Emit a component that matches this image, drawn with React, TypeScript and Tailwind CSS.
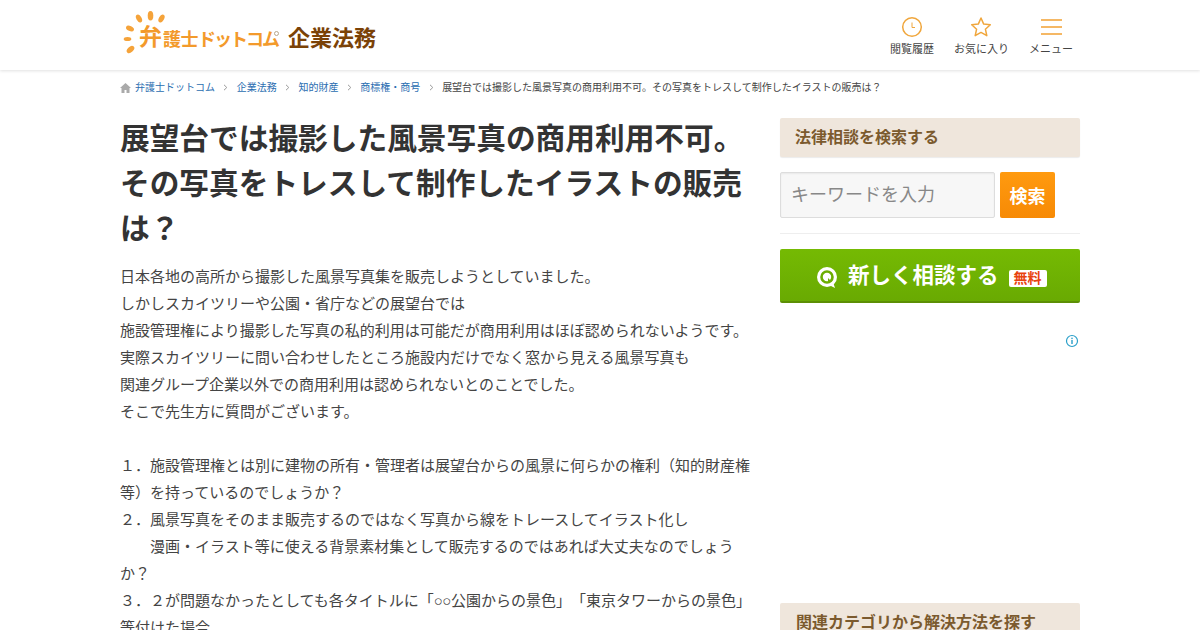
import React from "react";

function Logo() {
  return (
    <div className="relative h-[44px] w-[156px]">
      <svg className="absolute left-0 top-0" width="50" height="44" viewBox="0 0 50 44">
        <g fill="#f5a33a">
          <ellipse cx="27.5" cy="4.8" rx="2.8" ry="4.8" />
          <ellipse cx="16" cy="7.5" rx="2.6" ry="4.2" transform="rotate(-30 16 7.5)" />
          <ellipse cx="38.5" cy="7.5" rx="2.6" ry="4.2" transform="rotate(30 38.5 7.5)" />
          <ellipse cx="7" cy="17.5" rx="2.6" ry="4.2" transform="rotate(-65 7 17.5)" />
          <ellipse cx="4.5" cy="28" rx="2" ry="3.8" transform="rotate(90 4.5 28)" />
          <ellipse cx="7.5" cy="38.5" rx="2.8" ry="4.4" transform="rotate(48 7.5 38.5)" />
        </g>
      </svg>
      <div className="absolute left-[16px] top-[15px] flex items-end whitespace-nowrap font-bold leading-none text-[#f39a2b]">
        <span className="text-[23px]">弁</span>
        <span className="ml-[1px] text-[18px] tracking-[-0.5px]">護士</span>
        <span className="text-[18px] tracking-[-2px]">ドットコム</span>
      </div>
      <div className="absolute left-[151px] top-[20px] h-[5px] w-[5px] rounded-full border border-[#b9a68c]" />
    </div>
  );
}

function Chevron() {
  return (
    <svg width="5" height="7" viewBox="0 0 5 7" className="mx-[8.4px] shrink-0">
      <path d="M1 .8 3.8 3.5 1 6.2" fill="none" stroke="#999" strokeWidth="1" />
    </svg>
  );
}

const lines = [
  "日本各地の高所から撮影した風景写真集を販売しようとしていました。",
  "しかしスカイツリーや公園・省庁などの展望台では",
  "施設管理権により撮影した写真の私的利用は可能だが商用利用はほぼ認められないようです。",
  "実際スカイツリーに問い合わせしたところ施設内だけでなく窓から見える風景写真も",
  "関連グループ企業以外での商用利用は認められないとのことでした。",
  "そこで先生方に質問がございます。",
  "\u00a0",
  "１．施設管理権とは別に建物の所有・管理者は展望台からの風景に何らかの権利（知的財産権等）を持っているのでしょうか？",
  "２．風景写真をそのまま販売するのではなく写真から線をトレースしてイラスト化し",
  "\u3000\u3000漫画・イラスト等に使える背景素材集として販売するのではあれば大丈夫なのでしょうか？",
];

export default function App() {
  return (
    <div
      className="h-[630px] w-[1200px] overflow-hidden bg-white text-[#333] [text-spacing-trim:space-all]"
      style={{ fontFamily: '"Liberation Sans", "Noto Sans CJK JP", sans-serif' }}
    >
      <header className="h-[70px] bg-white shadow-[0_1px_3px_rgba(0,0,0,0.12)]">
        <div className="mx-auto flex h-full w-[960px] items-center">
          <div className="ml-[3px] mt-[-4px] flex items-center">
            <Logo />
            <span className="ml-[9px] mt-[11px] whitespace-nowrap text-[22px] font-bold leading-none text-[#7b4207]">企業法務</span>
          </div>
          <nav className="ml-auto mr-[7px] mt-[2px] flex text-[11px] text-[#444]">
            <div className="flex w-[44px] flex-col items-center">
              <svg width="22" height="22" viewBox="0 0 22 22" fill="none" stroke="#f0a63c" strokeWidth="1.5">
                <circle cx="11" cy="11" r="9.3" />
                <path d="M11 6.5V11.5H14" strokeWidth="1" />
              </svg>
              <span className="mt-[3px] whitespace-nowrap leading-[16px]">閲覧履歴</span>
            </div>
            <div className="ml-[20px] flex w-[55px] flex-col items-center">
              <svg width="22" height="22" viewBox="0 0 22 22" fill="none" stroke="#f0a63c" strokeWidth="1.5" strokeLinejoin="round" className="-translate-x-[1px]">
                <path d="M11 2 13.7 8.1 20.3 8.8 15.4 13.2 16.8 19.7 11 16.4 5.2 19.7 6.6 13.2 1.7 8.8 8.3 8.1Z" />
              </svg>
              <span className="mt-[3px] whitespace-nowrap leading-[16px]">お気に入り</span>
            </div>
            <div className="ml-[20px] flex w-[44px] flex-col items-center">
              <div className="flex h-[22px] flex-col justify-center gap-[5px]">
                <div className="h-[2px] w-[21px] bg-[#f5b865]" />
                <div className="h-[2px] w-[21px] bg-[#f5b865]" />
                <div className="h-[2px] w-[21px] bg-[#f5b865]" />
              </div>
              <span className="mt-[3px] whitespace-nowrap leading-[16px]">メニュー</span>
            </div>
          </nav>
        </div>
      </header>

      <div className="mx-auto w-[960px]">
        <div className="flex h-[34px] items-center whitespace-nowrap text-[10px] text-[#444]">
          <svg width="11" height="10" viewBox="0 0 11 10" className="mr-[4px] mt-[1px]" fill="#aaa">
            <path d="M5.5 0 11 5H9.5V10H6.5V7H4.5V10H1.5V5H0Z" />
          </svg>
          <span className="text-[#2a6db0]">弁護士ドットコム</span>
          <Chevron />
          <span className="text-[#2a6db0]">企業法務</span>
          <Chevron />
          <span className="text-[#2a6db0]">知的財産</span>
          <Chevron />
          <span className="text-[#2a6db0]">商標権・商号</span>
          <Chevron />
          <span>展望台では撮影した風景写真の商用利用不可。その写真をトレスして制作したイラストの販売は？</span>
        </div>

        <div className="flex justify-between pt-[14px]">
          <main className="w-[632px]">
            <h1 className="-mt-[2px] text-[29.7px] font-bold leading-[45px] text-[#333]">
              展望台では撮影した風景写真の商用利用不可。その写真をトレスして制作したイラストの販売は？
            </h1>
            <div className="mt-[12px] text-[15px] leading-[27px] text-[#444]">
              {lines.map((l, i) => (
                <p key={i}>{l}</p>
              ))}
              <p>
                ３．２が問題なかったとしても各タイトルに「<span className="tracking-[-0.5px]">○○</span>公園からの景色」「東京タワーからの景色」等付けた場合
              </p>
            </div>
          </main>

          <aside className="w-[300px]">
            <div className="h-[39px] rounded-[2px] bg-[#efe6dc] pl-[15px] text-[16px] font-bold leading-[39px] text-[#7b5a2e] shadow-[0_1px_1px_rgba(0,0,0,0.08)]">
              法律相談を検索する
            </div>
            <div className="mt-[15px] flex gap-[5px]">
              <div className="h-[46px] w-[215px] rounded-[2px] border border-[#ddd] bg-[#f7f7f7] pl-[10px] text-[18px] leading-[44px] text-[#888] shadow-[inset_0_1px_2px_rgba(0,0,0,0.06)]">
                キーワードを入力
              </div>
              <button className="h-[46px] w-[55px] rounded-[2px] bg-gradient-to-b from-[#ff9a0f] to-[#f78a05] pt-[3px] text-[18px] font-bold leading-none text-white">
                検索
              </button>
            </div>
            <div className="mt-[15px] border-t border-[#eee]" />
            <div className="mt-[15px] flex h-[54px] items-center rounded-[2px] border-b-2 border-[#5c8f05] bg-gradient-to-b from-[#75ba03] to-[#69aa02] pl-[37px] pt-[4px] text-white">
              <svg width="20" height="21" viewBox="0 0 20 21" className="mr-[11px] mt-[1px]">
                <circle cx="10" cy="10" r="10" fill="#fff" />
                <circle cx="10" cy="10" r="5.5" fill="none" stroke="#6cae02" strokeWidth="2.6" />
                <path d="M11 11 15 15 11 14Z" fill="#6cae02" />
                <path d="M12 18 18 21 16 15Z" fill="#fff" />
              </svg>
              <span className="whitespace-nowrap text-[21.5px] font-bold leading-none">新しく相談する</span>
              <span className="ml-[10px] mt-[2px] h-[17px] w-[38px] rounded-[2px] bg-white text-center text-[14px] font-bold leading-[17px] text-[#e8430f]">無料</span>
            </div>
            <div className="mt-[31px] flex justify-end pr-[1px]">
              <svg width="14" height="14" viewBox="0 0 14 14" fill="none">
                <circle cx="7" cy="7" r="5.5" stroke="#2a9fc9" strokeWidth="1.2" />
                <rect x="6.3" y="6" width="1.4" height="4" fill="#2a9fc9" />
                <rect x="6.3" y="3.7" width="1.4" height="1.4" fill="#2a9fc9" />
              </svg>
            </div>
            <div className="mt-[255px] h-[40px] rounded-[2px] bg-[#efe6dc] pl-[16px] text-[16px] font-bold leading-[40px] text-[#7b5a2e]">
              関連カテゴリから解決方法を探す
            </div>
          </aside>
        </div>
      </div>
    </div>
  );
}
